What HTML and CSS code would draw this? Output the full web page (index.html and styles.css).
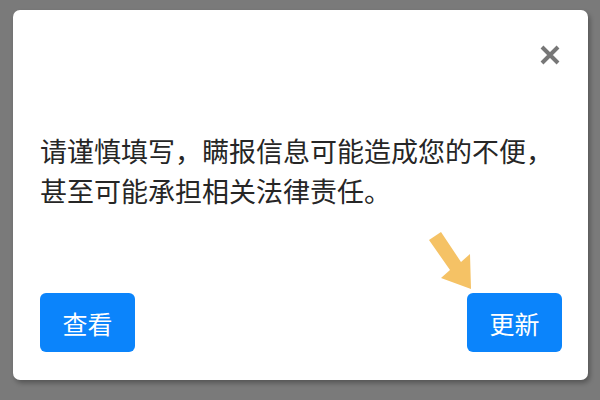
FILE: index.html
```html
<!DOCTYPE html>
<html lang="zh-CN">
<head>
  <meta charset="UTF-8">
  <title>提示</title>
  <link rel="stylesheet" href="styles.css">
</head>
<body>

  <div class="dialogo">
    <div class="topo">
      <button class="fechar" aria-label="关闭">
        <svg width="20" height="20" viewBox="0 0 20 20">
          <path d="M2 2 L18 18 M18 2 L2 18" stroke="#777" stroke-width="4" fill="none"/>
        </svg>
      </button>
    </div>

    <p class="mensagem">请谨慎填写，瞒报信息可能造成您的不便，甚至可能承担相关法律责任。</p>

    <div class="acoes">
      <button class="botao">查看</button>
      <button class="botao">更新</button>
      <!-- seta de destaque sobre o botão -->
      <svg class="seta" width="50" height="62" viewBox="0 0 50 62">
        <polygon points="16,2 4,10 25,40 16,48 46,59 45,24 36,32" fill="#f5c265"/>
      </svg>
    </div>
  </div>

</body>
</html>
```

FILE: styles.css
```css
:root {
  --fundo: #7a7a7a;
  --branco: #ffffff;
  --azul: #0b84fb;
  --texto: #262626;
}

body {
  margin: 0;
  padding: 10px 12px 20px 13px;
  background-color: var(--fundo);
  font-family: "Noto Sans CJK SC", "Noto Sans", sans-serif;
}

.dialogo {
  width: 575px;
  height: 370px;
  box-sizing: border-box;
  padding: 35px 26px 28px 27px;
  background-color: var(--branco);
  border-radius: 7px;
  box-shadow: 2px 3px 5px rgba(0,0,0,0.3);
  display: flex;
  flex-direction: column;
}

.topo {
  display: flex;
  justify-content: flex-end;
  padding-right: 2px;
}

.fechar {
  padding: 0;
  border: none;
  background: none;
  width: 20px;
  height: 20px;
  cursor: pointer;
}

.fechar svg {
  display: block;
}

.mensagem {
  margin: 66px 0 0;
  font-size: 27px;
  line-height: 40px;
  color: var(--texto);
}

.acoes {
  margin-top: auto;
  display: flex;
  justify-content: space-between;
  position: relative;
}

.botao {
  width: 95px;
  height: 59px;
  padding: 0;
  border: none;
  border-radius: 6px;
  background-color: var(--azul);
  color: var(--branco);
  font-family: inherit;
  font-size: 25px;
  cursor: pointer;
}

.seta {
  position: absolute;
  left: 385px;
  top: -63px;
}
```
